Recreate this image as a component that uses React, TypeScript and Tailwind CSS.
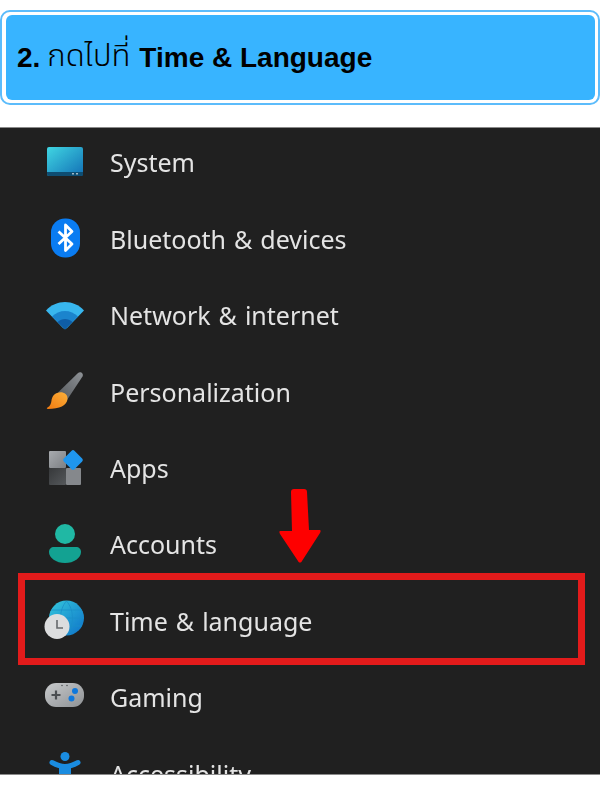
const rows = [
  { label: 'System', icon: <SystemIcon /> },
  { label: 'Bluetooth & devices', icon: <BluetoothIcon /> },
  { label: 'Network & internet', icon: <WifiIcon /> },
  { label: 'Personalization', icon: <BrushIcon /> },
  { label: 'Apps', icon: <AppsIcon /> },
  { label: 'Accounts', icon: <AccountIcon /> },
  { label: 'Time & language', icon: <TimeIcon /> },
  { label: 'Gaming', icon: <GamingIcon /> },
  { label: 'Accessibility', icon: <AccessIcon /> },
];

function Box({ children }: { children: React.ReactNode }) {
  return (
    <svg width="44" height="44" viewBox="0 0 44 44">
      {children}
    </svg>
  );
}

function SystemIcon() {
  return (
    <Box>
      <defs>
        <linearGradient id="sys" x1="0" y1="0" x2="1" y2="1">
          <stop offset="0" stopColor="#40d6e2" />
          <stop offset="1" stopColor="#1270b6" />
        </linearGradient>
      </defs>
      <rect x="4" y="6" width="36" height="29" rx="2" fill="url(#sys)" />
      <path d="M4 31h36v2a2 2 0 0 1-2 2H6a2 2 0 0 1-2-2z" fill="#0e4d72" />
      <rect x="29" y="32" width="2" height="1.500" fill="#9fb8c6" />
      <rect x="33" y="32" width="2" height="1.500" fill="#9fb8c6" />
    </Box>
  );
}

function BluetoothIcon() {
  return (
    <Box>
      <rect x="8" y="0.500" width="29" height="39" rx="14" fill="#0a7cf2" />
      <path d="M15.500 13.500 29 26l-6.500 6.500V7L29 13.500 15.500 26" fill="none" stroke="#fff" strokeWidth="2.800" strokeLinejoin="round" />
    </Box>
  );
}

function WifiIcon() {
  return (
    <Box>
      <path d="M3 16.500C13 5 31 5 41 16.500L24 34c-1 1-3 1-4 0z" fill="#38b6ee" />
      <path d="M9 22.500C16 15 28 15 35 22.500L22 35.500z" fill="#1b84cd" />
      <path d="M14.500 28C19 24 25 24 29.500 28L22 35.500z" fill="#0f5da6" />
    </Box>
  );
}

function BrushIcon() {
  return (
    <Box>
      <defs>
        <linearGradient id="brush" x1="0" y1="1" x2="1" y2="0">
          <stop offset="0" stopColor="#55585c" />
          <stop offset="1" stopColor="#8e9296" />
        </linearGradient>
        <linearGradient id="bristle" x1="0" y1="1" x2="1" y2="0">
          <stop offset="0" stopColor="#f07a10" />
          <stop offset="1" stopColor="#fdb03a" />
        </linearGradient>
      </defs>
      <path d="M15 22.500 35 3c2.500-2 6 .5 4.500 3.500L24 30z" fill="url(#brush)" />
      <path d="M14 23c5-2 11 .5 10.500 6-.5 6.500-8 10-19.500 10-1.500 0-1.500-1-.5-1.500 3-1.500 3.500-4 4-7 .5-3 2-6.500 5.500-7.500z" fill="url(#bristle)" />
    </Box>
  );
}

function AppsIcon() {
  return (
    <Box>
      <defs>
        <linearGradient id="appsTop" x1="0" y1="0" x2="1" y2="1">
          <stop offset="0" stopColor="#a8abaf" />
          <stop offset="1" stopColor="#7d8084" />
        </linearGradient>
        <linearGradient id="appsLeft" x1="0" y1="0" x2="1" y2="1">
          <stop offset="0" stopColor="#36383a" />
          <stop offset="1" stopColor="#55585b" />
        </linearGradient>
      </defs>
      <rect x="6" y="4" width="17" height="17" rx="1" fill="url(#appsTop)" />
      <rect x="6" y="21" width="17" height="17" rx="1" fill="url(#appsLeft)" />
      <rect x="23" y="21" width="15" height="17" rx="1" fill="#85888c" />
      <rect x="22.500" y="5.500" width="15" height="15" rx="2" fill="#1f96ee" transform="rotate(45 30 13)" />
    </Box>
  );
}

function AccountIcon() {
  return (
    <Box>
      <circle cx="22" cy="11" r="10" fill="#20b8a4" />
      <path d="M11 24h22c3 0 5 2 5 5 0 6-7 11-16 11S6 35 6 29c0-3 2-5 5-5z" fill="#13a292" />
    </Box>
  );
}

function TimeIcon() {
  return (
    <Box>
      <defs>
        <linearGradient id="globe" x1="0" y1="0" x2="1" y2="1">
          <stop offset="0" stopColor="#35c8dc" />
          <stop offset="1" stopColor="#0d72c9" />
        </linearGradient>
      </defs>
      <circle cx="23.500" cy="18" r="17.500" fill="url(#globe)" />
      <path d="M6 18h35M8 10h31M8 26h31M23.500 1c-8 9-8 25 0 34M23.500 1c8 9 8 25 0 34" fill="none" stroke="#1b8fc9" strokeWidth="0.800" />
      <circle cx="14" cy="26.500" r="12.500" fill="#dcddde" />
      <path d="M14 20v8h6" fill="none" stroke="#66696c" strokeWidth="1.600" />
    </Box>
  );
}

function GamingIcon() {
  return (
    <Box>
      <defs>
        <linearGradient id="pad" x1="0" y1="0" x2="1" y2="1">
          <stop offset="0" stopColor="#c8cacc" />
          <stop offset="1" stopColor="#8e9194" />
        </linearGradient>
      </defs>
      <rect x="2" y="7" width="39" height="24" rx="11" fill="url(#pad)" />
      <path d="M13 14.500v9M8.500 19h9" stroke="#4b4e52" strokeWidth="2.200" />
      <circle cx="32" cy="15" r="3" fill="#0f78dc" />
      <circle cx="28.500" cy="22.500" r="3" fill="#0f78dc" />
      <circle cx="19" cy="9.500" r="0.800" fill="#55585b" />
      <circle cx="24" cy="9.500" r="0.800" fill="#55585b" />
    </Box>
  );
}

function AccessIcon() {
  return (
    <Box>
      <circle cx="22" cy="4.500" r="4.500" fill="#1a8ce0" />
      <path d="M9 10.500c4.500 2.500 8.500 4 13 4s8.500-1.500 13-4" fill="none" stroke="#1a8ce0" strokeWidth="5" strokeLinecap="round" />
      <rect x="16" y="13" width="12" height="24" fill="#1a8ce0" />
    </Box>
  );
}

export default function App() {
  return (
    <div className="h-[800px] w-[600px] overflow-hidden bg-white font-['Liberation_Sans',sans-serif]">
      <div className="mt-[10px] h-[95px] rounded-[10px] border-2 border-[#5cbcfb] p-[3px] pl-[4px]">
        <div className="flex h-full items-center rounded-[6px] bg-[#38b4ff] pl-[11px] text-[28px] text-black">
          <b className="font-bold">2.</b>
          <span className="ml-[7px] font-['Noto_Sans_Thai','Noto_Sans',sans-serif] text-[31px] font-light">กดไปที่</span>
          <b className="ml-[9px] font-bold">Time &amp; Language</b>
        </div>
      </div>

      <div className="relative mt-[22px] h-[648px] overflow-hidden border-y border-[#8a8a8a] bg-[#202020]">
        <div className="-mt-[3px] font-['Noto_Sans',sans-serif] text-[25px] text-[#e4e4e4] [word-spacing:1.5px] blur-[0.4px]">
          {rows.map(r => (
            <div key={r.label} className="flex h-[76.4px] items-center">
              <div className="mr-[23px] ml-[43px] shrink-0">{r.icon}</div>
              <span>{r.label}</span>
            </div>
          ))}
        </div>

        <svg className="absolute top-[361px] left-[278px]" width="46" height="78" viewBox="0 0 46 78">
          <path d="M16 0h10c2 0 3 1 3 3l2 38h10c2 0 2 1 1 3L24 72c-1 2-3 2-4 0L2 45c-1-2-1-3 1-3h11L13 3c0-2 1-3 3-3z" fill="#fe0000" />
        </svg>
        <div className="absolute top-[445px] left-[18px] h-[92px] w-[567px] border-[7px] border-[#e21b1b]" />
      </div>
    </div>
  );
}
